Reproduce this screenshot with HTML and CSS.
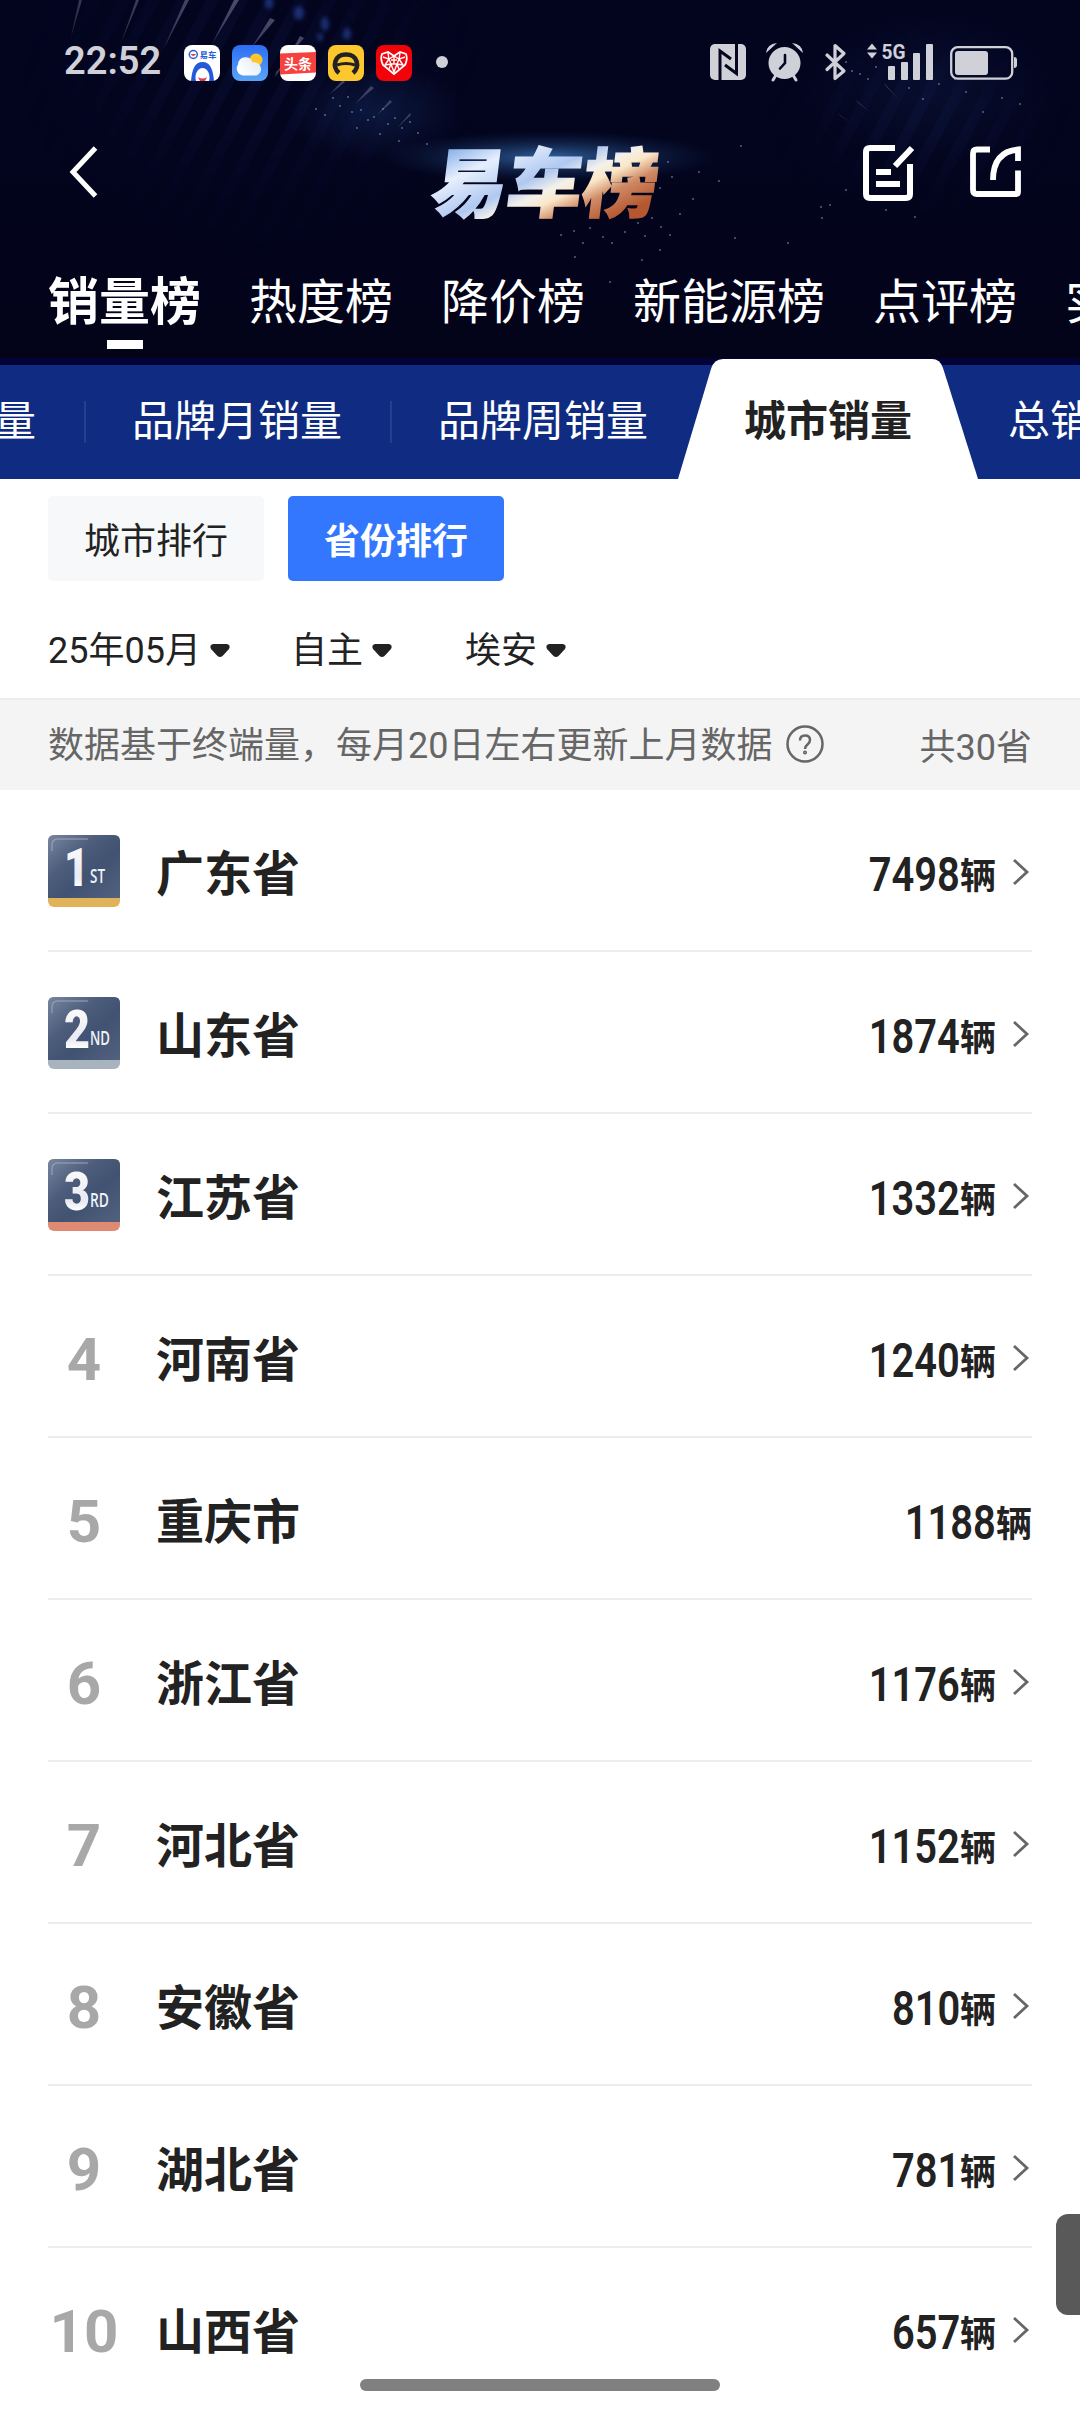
FILE: index.html
```html
<!DOCTYPE html>
<html lang="zh-CN">
<head>
<meta charset="utf-8">
<title>易车榜</title>
<link rel="stylesheet" href="styles.css">
</head>
<body>
<div class="screen">
  <header class="hero">
    <svg class="hero-art" viewBox="0 0 1080 365" aria-hidden="true">
      <defs>
        <radialGradient id="haze"><stop offset="0" stop-color="#1b3a78" stop-opacity=".35"/><stop offset="1" stop-color="#1b3a78" stop-opacity="0"/></radialGradient>
        <radialGradient id="glow"><stop offset="0" stop-color="#3f7fc4" stop-opacity=".75"/><stop offset="1" stop-color="#16356b" stop-opacity="0"/></radialGradient>
        <linearGradient id="ray" x1="1" y1="0" x2="0" y2="1"><stop offset="0" stop-color="#8583a8" stop-opacity=".75"/><stop offset="1" stop-color="#55557f" stop-opacity=".15"/></linearGradient>
        <pattern id="slats" width="26" height="26" patternUnits="userSpaceOnUse" patternTransform="rotate(28)"><rect width="11" height="26" fill="#1a2560" opacity=".2"/></pattern>
        <radialGradient id="fade"><stop offset="0" stop-color="#fff"/><stop offset="1" stop-color="#fff" stop-opacity="0"/></radialGradient>
        <mask id="slatMask"><ellipse cx="250" cy="70" rx="230" ry="180" fill="url(#fade)"/><ellipse cx="920" cy="125" rx="150" ry="95" fill="url(#fade)"/></mask>
      </defs>
      <rect width="1080" height="365" fill="url(#slats)" mask="url(#slatMask)"/>
      <ellipse cx="375" cy="112" rx="90" ry="50" fill="url(#haze)"/>
      <ellipse cx="930" cy="90" rx="130" ry="80" fill="url(#haze)" opacity=".5"/>
      <ellipse cx="550" cy="157" rx="170" ry="26" fill="url(#glow)"/>
      <g fill="url(#ray)">
        <path d="M79 0h3L71 37zM136 0h3L121 43zM185 0h4L163 50zM234 0h5L212 44zM270 18l5 2L252 47zM300 36l4 2L289 56zM291 56l-16 21 1-5zM343 80l2 2L329 95zM371 86l3 2L355 104zM390 100l2 2L377 115zM410 113l1 2-14 13z"/>
        <path d="M884 83l16 18-14-15zM856 100l14 12-12-9zM838 113l13 10-11-7z"/>
      </g>
      <g fill="#3150b8" class="bokeh"><ellipse cx="269" cy="3" rx="4" ry="6"/><ellipse cx="299" cy="13" rx="5" ry="7"/><ellipse cx="325" cy="24" rx="4" ry="7"/><ellipse cx="347" cy="34" rx="4" ry="6"/><ellipse cx="320" cy="37" rx="3" ry="4"/></g>
      <path class="dust" d="M333 98h0M340 106h0M348 97h0M352 112h0M361 110h0M368 120h0M374 117h0M383 109h0M388 124h0M395 118h0M402 128h0M325 115h0M316 109h0M410 122h0M380 134h0M399 141h0M418 133h0M427 144h0M357 128h0M846 62h0M852 71h0M860 74h0M868 79h0M876 67h0M893 77h0M909 88h0M923 99h0M939 84h0M955 79h0M966 92h0M983 112h0M1002 98h0M1020 104h0M561 235h0M574 231h0M583 243h0M590 228h0M603 237h0M612 243h0M625 232h0M638 223h0M645 236h0M652 218h0M661 227h0M670 235h0M680 214h0M693 199h0M660 188h0M672 177h0M668 162h0M699 172h0M719 181h0M735 238h0M741 146h0M788 243h0M822 218h0M830 205h0M846 190h0M886 210h0M915 217h0M642 260h0M610 282h0M575 257h0M660 250h0M821 207h0"/>
    </svg>
    <div class="status">
      <div class="status-left">
        <span class="clock">22:52</span>
        <div class="apps">
          <svg width="36" height="36" viewBox="0 0 36 36"><rect width="36" height="36" rx="8" fill="#fff"/><circle cx="9.300" cy="9.500" r="4" fill="none" stroke="#2b5fd9" stroke-width="1.500"/><path d="M6.500 9q2.800 4 5.600 0z" fill="#e5404d"/><text x="15.500" y="13" class="app-name">易车</text><path d="M7 36C8 24 11 17 18.500 17S29 24 30 36z" fill="#2459dc"/><path d="M12 36c-2-7 2-13 6.500-13s8.500 6 6.500 13z" fill="#fff"/><path d="M14 32q4.500 3 9 0l-2 4h-5z" fill="#df3850"/></svg>
          <svg width="36" height="36" viewBox="0 0 36 36"><defs><linearGradient id="sky" x2="0" y2="1"><stop stop-color="#2c6df3"/><stop offset="1" stop-color="#5aa5f8"/></linearGradient><linearGradient id="cloud" x1="1" x2="0" y2=".6"><stop stop-color="#dfe9f6"/><stop offset="1" stop-color="#fff"/></linearGradient></defs><rect width="36" height="36" rx="8" fill="url(#sky)"/><circle cx="24" cy="15" r="6.500" fill="#fdc62e"/><path d="M11 30.500a6.500 7 0 01-5-11 7.500 8 0 0114.500-2 7 6.800 0 014 13z" fill="url(#cloud)"/></svg>
          <svg width="36" height="36" viewBox="0 0 36 36"><rect width="36" height="36" rx="8" fill="#fff"/><path d="M0 8.500L36 7v20.500L0 29.500z" fill="#f6413e"/><text x="4" y="23.500" class="app-news">头条</text></svg>
          <svg width="36" height="36" viewBox="0 0 36 36"><rect width="36" height="36" rx="8" fill="#fdc72e"/><path d="M11 28C4 22 6 9.500 18 9.500S32 22 25 28" fill="none" stroke="#222" stroke-width="4.500"/><path d="M9 20q9-3 18 0" fill="none" stroke="#222" stroke-width="3"/></svg>
          <svg width="36" height="36" viewBox="0 0 36 36"><rect width="36" height="36" rx="8" fill="#f20309"/><path d="M18 29L7 20Q4 14 6 9l6-2 6 4 6-4 6 2q2 5-1 11z" fill="none" stroke="#fff" stroke-width="1.800"/><path d="M7 12l6 2-4 6 6-1 3 8 3-8 6 1-4-6 6-2M12 8l1 6 5-3 5 3 1-6M9 20l4-6 2 5M27 20l-4-6-2 5M13 24l2-5h6l2 5M15 15h6M18 12v7" fill="none" stroke="#fff" stroke-width="1.400"/></svg>
        </div>
        <i class="more-dot"></i>
      </div>
      <svg class="status-right" width="310" height="40" viewBox="708 42 310 40">
        <rect x="710" y="44" width="36" height="36" rx="5" fill="#d0d0d9"/>
        <path d="M720 80V51l11 8M736.500 44v29.500L725 65" fill="none" stroke="#06071f" stroke-width="3"/>
        <g fill="#d0d0d9"><circle cx="784.500" cy="63" r="16"/><path d="M766 53q1-9 11-10z M803 53q-1-9-11-10z"/></g>
        <path d="M776 75l-3 5M793 75l3 5" stroke="#d0d0d9" stroke-width="3" stroke-linecap="round"/>
        <path d="M785 55v8l-5 5.500" fill="none" stroke="#06071f" stroke-width="2.600" stroke-linecap="round"/>
        <path d="M827 55l17 16-9 7.500V45.500l9 8-17 16" fill="none" stroke="#d0d0d9" stroke-width="3.200" stroke-linejoin="round" stroke-linecap="round"/>
        <g fill="#d0d0d9"><path d="M872 43.500l5 6h-10zM872 58.500l5-6h-10z"/><text x="881.500" y="59" class="net" textLength="24" lengthAdjust="spacingAndGlyphs">5G</text><rect x="888" y="66" width="7" height="14" rx="1"/><rect x="901" y="62" width="7" height="18" rx="1"/><rect x="913" y="53" width="7" height="27" rx="1"/><rect x="926" y="44" width="7" height="36" rx="1"/><rect x="955" y="51" width="33" height="24" rx="3"/><path d="M1014 57q3 0 3 3v5q0 3-3 3z"/></g>
        <rect x="951.200" y="47.200" width="61" height="31.500" rx="6.500" fill="none" stroke="#d0d0d9" stroke-width="2.300"/>
      </svg>
    </div>
    <div class="titlebar">
      <svg width="36" height="56" viewBox="0 0 36 56"><path d="M31.500 4L9 28l22.500 24" fill="none" stroke="#fff" stroke-width="5"/></svg>
      <svg class="logo" width="260" height="86" viewBox="410 142 260 86">
        <defs>
          <linearGradient id="metal" gradientUnits="userSpaceOnUse" x1="90" y1="-110" x2="156" y2="22"><stop offset="0" stop-color="#6f9fe4"/><stop offset=".26" stop-color="#e6effd"/><stop offset=".5" stop-color="#b0c8f0"/><stop offset=".62" stop-color="#f4f1ea"/><stop offset=".7" stop-color="#fbe7c8"/><stop offset=".82" stop-color="#cf8a66"/><stop offset="1" stop-color="#b5572f"/></linearGradient>
        </defs>
        <g transform="translate(424 213) skewX(-7)">
          <text class="logo-text" fill="url(#metal)" stroke="url(#metal)" textLength="226" lengthAdjust="spacingAndGlyphs">易车榜</text>
        </g>
      </svg>
      <div class="actions">
        <svg width="52" height="60" viewBox="0 0 52 60"><path d="M32 5H7q-4 0-4 4v42q0 4 4 4h36q4 0 4-4V21" fill="none" stroke="#fff" stroke-width="6"/><path d="M32 23L49 5M13 29h15M13 41h24" fill="none" stroke="#fff" stroke-width="6"/></svg>
        <svg width="54" height="60" viewBox="0 0 54 60"><path d="M22 6.500H9q-4 0-4 4V47q0 4 4 4h39q2 0 2-2V27.500M25 37Q25 9 50 6.500V18" fill="none" stroke="#fff" stroke-width="5.800"/></svg>
      </div>
    </div>
    <nav class="boards">
      <a class="board active">销量榜</a><a class="board">热度榜</a><a class="board">降价榜</a><a class="board">新能源榜</a><a class="board">点评榜</a><a class="board">实测榜</a>
    </nav>
  </header>

  <nav class="subtabs">
    <a class="sub">销量</a><i class="bar"></i>
    <a class="sub">品牌月销量</a><i class="bar"></i>
    <a class="sub">品牌周销量</a>
    <a class="sub current"><svg class="tab-shape" width="300" height="120" viewBox="0 0 300 120"><path d="M0 120L33 10Q36 0 45 0H254Q262 0 265 9L300 120z" fill="#fff"/></svg><span>城市销量</span></a>
    <a class="sub">总销量</a>
  </nav>

  <section class="filters">
    <div class="modes"><button class="mode">城市排行</button><button class="mode on">省份排行</button></div>
    <div class="selects">
      <span class="select month">25年05月<svg class="caret" viewBox="0 0 20 14"><path d="M3 0H17Q21 1 19 5L12.500 12Q10 14 7.500 12L1 5Q-1 1 3 0z"/></svg></span>
      <span class="select origin">自主<svg class="caret" viewBox="0 0 20 14"><path d="M3 0H17Q21 1 19 5L12.500 12Q10 14 7.500 12L1 5Q-1 1 3 0z"/></svg></span>
      <span class="select brand">埃安<svg class="caret" viewBox="0 0 20 14"><path d="M3 0H17Q21 1 19 5L12.500 12Q10 14 7.500 12L1 5Q-1 1 3 0z"/></svg></span>
    </div>
  </section>

  <div class="note">
    <span class="source">数据基于终端量，每月20日左右更新上月数据</span>
    <svg class="help" width="38" height="38" viewBox="0 0 38 38"><circle cx="19" cy="19" r="17.500"/><path d="M14 15.500q0-5 5-5t5 4.500q0 2.500-2.500 4.500T19 24"/><circle cx="19" cy="27.500" r=".8"/></svg>
    <span class="total">共30省</span>
  </div>

  <ol class="ranking">
    <li class="row"><svg class="badge" viewBox="0 0 72 72"><defs><linearGradient id="plate" x2="1" y2="1"><stop stop-color="#7886a0"/><stop offset=".35" stop-color="#4d5d7b"/><stop offset=".6" stop-color="#415272"/><stop offset="1" stop-color="#52617d"/></linearGradient><linearGradient id="digit" x2="0" y2="1"><stop stop-color="#fff"/><stop offset=".65" stop-color="#e9eaf2"/><stop offset=".8" stop-color="#fff"/></linearGradient></defs><rect width="72" height="72" rx="6" fill="#e0b35a"/><path d="M0 63V6q0-6 6-6h60q6 0 6 6v57z" fill="url(#plate)"/><path class="shine" d="M4 16V10q0-6 6-6h30"/><text class="place" x="16" y="51" textLength="25" lengthAdjust="spacingAndGlyphs">1</text><text class="suffix" x="42" y="48" textLength="15" lengthAdjust="spacingAndGlyphs">ST</text></svg><b class="name">广东省</b><span class="sales"><span class="num">7498</span>辆</span><svg class="go" viewBox="0 0 36 30"><path d="M18 4L31 16 18 28"/></svg></li>
    <li class="row"><svg class="badge" viewBox="0 0 72 72"><rect width="72" height="72" rx="6" fill="#a7b4bd"/><path d="M0 63V6q0-6 6-6h60q6 0 6 6v57z" fill="url(#plate)"/><path class="shine" d="M4 16V10q0-6 6-6h30"/><text class="place" x="16" y="51" textLength="26" lengthAdjust="spacingAndGlyphs">2</text><text class="suffix" x="42" y="48" textLength="20" lengthAdjust="spacingAndGlyphs">ND</text></svg><b class="name">山东省</b><span class="sales"><span class="num">1874</span>辆</span><svg class="go" viewBox="0 0 36 30"><path d="M18 4L31 16 18 28"/></svg></li>
    <li class="row"><svg class="badge" viewBox="0 0 72 72"><rect width="72" height="72" rx="6" fill="#df8b73"/><path d="M0 63V6q0-6 6-6h60q6 0 6 6v57z" fill="url(#plate)"/><path class="shine" d="M4 16V10q0-6 6-6h30"/><text class="place" x="16" y="51" textLength="26" lengthAdjust="spacingAndGlyphs">3</text><text class="suffix" x="42" y="48" textLength="19" lengthAdjust="spacingAndGlyphs">RD</text></svg><b class="name">江苏省</b><span class="sales"><span class="num">1332</span>辆</span><svg class="go" viewBox="0 0 36 30"><path d="M18 4L31 16 18 28"/></svg></li>
    <li class="row"><span class="rank">4</span><b class="name">河南省</b><span class="sales"><span class="num">1240</span>辆</span><svg class="go" viewBox="0 0 36 30"><path d="M18 4L31 16 18 28"/></svg></li>
    <li class="row"><span class="rank">5</span><b class="name">重庆市</b><span class="sales"><span class="num">1188</span>辆</span></li>
    <li class="row"><span class="rank">6</span><b class="name">浙江省</b><span class="sales"><span class="num">1176</span>辆</span><svg class="go" viewBox="0 0 36 30"><path d="M18 4L31 16 18 28"/></svg></li>
    <li class="row"><span class="rank">7</span><b class="name">河北省</b><span class="sales"><span class="num">1152</span>辆</span><svg class="go" viewBox="0 0 36 30"><path d="M18 4L31 16 18 28"/></svg></li>
    <li class="row"><span class="rank">8</span><b class="name">安徽省</b><span class="sales"><span class="num">810</span>辆</span><svg class="go" viewBox="0 0 36 30"><path d="M18 4L31 16 18 28"/></svg></li>
    <li class="row"><span class="rank">9</span><b class="name">湖北省</b><span class="sales"><span class="num">781</span>辆</span><svg class="go" viewBox="0 0 36 30"><path d="M18 4L31 16 18 28"/></svg></li>
    <li class="row"><span class="rank">10</span><b class="name">山西省</b><span class="sales"><span class="num">657</span>辆</span><svg class="go" viewBox="0 0 36 30"><path d="M18 4L31 16 18 28"/></svg></li>
  </ol>
  <i class="side-handle"></i>
  <i class="home-indicator"></i>
</div>
</body>
</html>
```
FILE: styles.css
```css
* { box-sizing: border-box; margin: 0; padding: 0; }
body {
  background: #fff;
  color: #222;
  font-family: "Noto Sans CJK SC", sans-serif;
}
.screen { position: relative; width: 1080px; height: 2412px; overflow: hidden; background: #fff; }
svg { display: block; flex: none; overflow: visible; }

/* header */
.hero { position: relative; height: 365px; overflow: hidden; background: linear-gradient(#03051f 0, #03041c 70%, #030319 98%, #040338 98%); color: #fff; }
.hero-art { position: absolute; inset: 0; width: 1080px; height: 365px; }
.bokeh { opacity: .55; filter: blur(2px); }
.dust { fill: none; stroke: #a9bcdd; stroke-width: 2; stroke-linecap: round; opacity: .5; }
.status { position: relative; display: flex; justify-content: space-between; align-items: center; height: 124px; padding: 0 62px 0 64px; }
.status-left { display: flex; align-items: center; }
.clock { width: 120px; margin-top: -2px; font: 600 38px/44px Roboto, sans-serif; color: #d0d0d9; }
.apps { display: flex; gap: 12px; margin-top: 1px; }
.app-name { font: 700 8.500px "Noto Sans CJK SC", sans-serif; fill: #2b5fd9; }
.app-news { font: 700 14px "Noto Sans CJK SC", sans-serif; fill: #fff; }
.more-dot { width: 12px; height: 12px; margin-left: 24px; border-radius: 50%; background: #d0d0d9; }
.net { font: 700 20px Roboto, sans-serif; }
.titlebar { position: relative; display: flex; justify-content: space-between; align-items: center; height: 96px; padding: 0 58px 0 64px; }
.logo { margin-left: 126px; margin-top: 22px; }
.logo-text { font: 900 75px "Noto Sans CJK SC", sans-serif; stroke-width: 1.500; }
.actions { display: flex; gap: 53px; margin-top: 2px; }
.boards { position: relative; display: flex; align-items: center; gap: 48px; height: 145px; padding: 0 48px 0; white-space: nowrap; }
.board { flex: none; font-size: 48px; line-height: 96px; margin-top: 10px; }
.board.active { position: relative; font-size: 51px; font-weight: 700; }
.board.active::after { content: ""; position: absolute; left: 50%; bottom: -3px; width: 36px; height: 9px; margin-left: -18px; background: #fff; }

/* category strip */
.subtabs { display: flex; align-items: center; gap: 48px; height: 114px; background: #0f2c82; color: #fff; font-size: 42px; line-height: 60px; white-space: nowrap; }
.sub { position: relative; flex: none; padding-bottom: 8px; }
.sub:first-child { margin-left: -48px; }
.bar { flex: none; width: 2px; height: 42px; margin-right: -2px; background: #23408f; }
.sub.current { margin: 0 48px; color: #222; font-weight: 700; }
.sub.current span { position: relative; }
.tab-shape { position: absolute; left: -66px; top: -29px; }

/* filters */
.filters { height: 219px; padding: 17px 48px 0; }
.modes { display: flex; gap: 24px; }
.mode { width: 216px; height: 85px; border: 0; border-radius: 5px; background: #f7f8fa; color: #222; font: 400 36px/85px "Noto Sans CJK SC", sans-serif; }
.mode.on { background: #3377ff; color: #fff; font-weight: 700; }
.selects { display: flex; margin-top: 44px; font-family: Roboto, "Noto Sans CJK SC", sans-serif; font-size: 36px; line-height: 52px; }
.select { display: flex; align-items: center; gap: 9px; }
.month { width: 243px; }
.origin { width: 174px; }
.caret { width: 20px; height: 14px; fill: #222; }

/* source note */
.note { display: flex; align-items: center; height: 92px; padding: 0 48px; border-top: 2px solid #ededed; background: #f4f4f4; color: #666; font: 400 36px/52px Roboto, "Noto Sans CJK SC", sans-serif; }
.source { margin-top: 2px; }
.help { margin-left: 14px; margin-top: -3px; fill: none; stroke: #666; stroke-width: 2.500; }
.total { margin-left: auto; margin-top: 5px; }

/* ranking */
.ranking { list-style: none; padding: 0 48px; }
.row { display: flex; align-items: center; height: 162px; border-bottom: 2px solid #ededed; }
.row:last-child { border-color: transparent; }
.badge { width: 72px; height: 72px; margin-top: 2px; }
.shine { fill: none; stroke: #a3afc2; stroke-width: 1.500; opacity: .6; }
.place { font: 900 53px Roboto, sans-serif; fill: url(#digit); }
.suffix { font: 600 19px "Open Sans", sans-serif; fill: #eef2f8; }
.rank { width: 72px; margin-top: 7px; text-align: center; color: #a8a8a8; font: 700 60px/70px Roboto, sans-serif; }
.name { margin-left: 36px; font-size: 48px; line-height: 72px; }
.sales { display: flex; align-items: baseline; margin-left: auto; margin-top: 6px; font-size: 36px; font-weight: 700; line-height: 56px; }
.num { font: 600 48px/56px Roboto, sans-serif; transform: translateY(2px) scaleX(.83); transform-origin: right; }
.go { width: 36px; height: 30px; margin-top: 1px; fill: none; stroke: #666; stroke-width: 2.800; }

.side-handle { position: absolute; right: 0; top: 2214px; width: 24px; height: 101px; border-radius: 12px 0 0 12px; background: #595959; }
.home-indicator { position: absolute; left: 360px; top: 2379px; width: 360px; height: 12px; border-radius: 6px; background: #808080; }
```
